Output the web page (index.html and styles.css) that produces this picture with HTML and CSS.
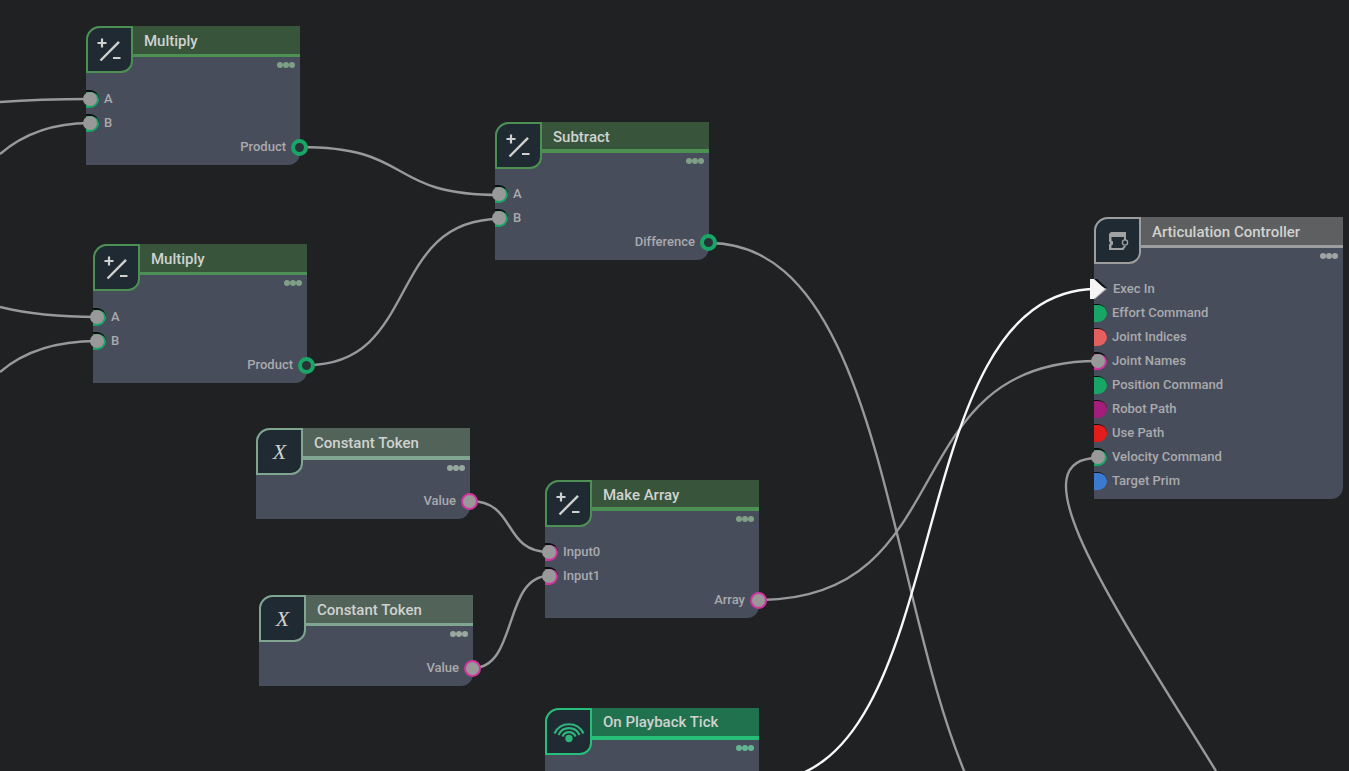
FILE: index.html
```html
<!DOCTYPE html>
<html lang="en">
<head>
<meta charset="utf-8">
<title>Action Graph</title>
<link rel="stylesheet" href="styles.css">
</head>
<body>
<svg class="symbols" aria-hidden="true">
  <symbol id="math" viewBox="0 0 43 43"><path d="M9.500 15h9M14 10.500v9M25 30h7.500" stroke-width="2.200"/><path d="M12.500 32.500 31 13.800" stroke-width="2.400"/></symbol>
  <symbol id="joint" viewBox="0 0 43 43"><path class="solid" d="M15 13h15v8.500h-2V18H15.500v3.500l1.500 1v3l-1.500 1v2.500H26l2-2h2l-2.500 4H13V25.500l1-1v-1l-1-1V15z"/><circle cx="29" cy="23.500" r="2.600" stroke-width="1.300" class="hole"/></symbol>
  <symbol id="signal" viewBox="0 0 43 43"><circle cx="22" cy="28.500" r="3.700" class="dot"/><path d="M15.500 26.500a7 7 0 0 1 13 0M11.500 25a11.500 11.500 0 0 1 21 0M7.500 23.500a16 16 0 0 1 29 0" stroke-width="2.200"/></symbol>
</svg>
<main class="canvas">
  <svg class="wires" aria-hidden="true">
    <path d="M0 102Q40 99 90 99"/>
    <path d="M0 154Q36 123 90 123"/>
    <path d="M0 307Q40 317 97 317"/>
    <path d="M0 372Q36 341 97 341"/>
    <path d="M300 147C416 147 384 195 500 195"/>
    <path d="M307 365C421 365 385 219 500 219"/>
    <path d="M470 501C517 501 502 552 549 552"/>
    <path d="M473 668C518 668 503 576 549 576"/>
    <path d="M709 243C945 243 867 898 1103 898"/>
    <path d="M759 600C963 600 893 361 1097 361"/>
    <path d="M1098 458C1014 458 1110 600 1216 771"/>
    <path class="exec" d="M759 782C962 782 894 289 1097 289"/>
  </svg>

  <section class="node math multiply-one">
    <header><span class="icon"><svg><use href="#math"/></svg></span><h2>Multiply</h2><button class="menu" aria-label="Multiply options"><i></i><i></i><i></i></button></header>
    <ul>
      <li class="in number linked">A</li>
      <li class="in number linked">B</li>
      <li class="out number">Product</li>
    </ul>
  </section>

  <section class="node math multiply-two">
    <header><span class="icon"><svg><use href="#math"/></svg></span><h2>Multiply</h2><button class="menu" aria-label="Multiply options"><i></i><i></i><i></i></button></header>
    <ul>
      <li class="in number linked">A</li>
      <li class="in number linked">B</li>
      <li class="out number">Product</li>
    </ul>
  </section>

  <section class="node math subtract">
    <header><span class="icon"><svg><use href="#math"/></svg></span><h2>Subtract</h2><button class="menu" aria-label="Subtract options"><i></i><i></i><i></i></button></header>
    <ul>
      <li class="in number linked">A</li>
      <li class="in number linked">B</li>
      <li class="out number">Difference</li>
    </ul>
  </section>

  <section class="node token token-one">
    <header><span class="icon glyph">X</span><h2>Constant Token</h2><button class="menu" aria-label="Constant Token options"><i></i><i></i><i></i></button></header>
    <ul>
      <li class="out name linked">Value</li>
    </ul>
  </section>

  <section class="node token token-two">
    <header><span class="icon glyph">X</span><h2>Constant Token</h2><button class="menu" aria-label="Constant Token options"><i></i><i></i><i></i></button></header>
    <ul>
      <li class="out name linked">Value</li>
    </ul>
  </section>

  <section class="node math make-array">
    <header><span class="icon"><svg><use href="#math"/></svg></span><h2>Make Array</h2><button class="menu" aria-label="Make Array options"><i></i><i></i><i></i></button></header>
    <ul>
      <li class="in name linked">Input0</li>
      <li class="in name linked">Input1</li>
      <li class="out name linked">Array</li>
    </ul>
  </section>

  <section class="node event playback">
    <header><span class="icon"><svg><use href="#signal"/></svg></span><h2>On Playback Tick</h2><button class="menu" aria-label="On Playback Tick options"><i></i><i></i><i></i></button></header>
  </section>

  <section class="node robot articulation">
    <header><span class="icon"><svg><use href="#joint"/></svg></span><h2>Articulation Controller</h2><button class="menu" aria-label="Articulation Controller options"><i></i><i></i><i></i></button></header>
    <ul>
      <li class="in trigger"><svg class="arrow"><path class="edge" d="M4 0h3l10 9-2 1z"/><path class="shade" d="M4 4 17 10 5 20z"/><path d="M0 0h4l11 10L4 20H0z"/></svg>Exec In</li>
      <li class="in number">Effort Command</li>
      <li class="in index">Joint Indices</li>
      <li class="in name linked">Joint Names</li>
      <li class="in number">Position Command</li>
      <li class="in path">Robot Path</li>
      <li class="in flag">Use Path</li>
      <li class="in number linked">Velocity Command</li>
      <li class="in target">Target Prim</li>
    </ul>
  </section>
</main>
</body>
</html>
```

FILE: styles.css
```css
body {
  margin: 0;
  background: #202123;
  font-family: Roboto, "Liberation Sans", sans-serif;
}

.symbols {
  display: none;
}

.canvas {
  position: relative;
  height: 100vh;
  overflow: hidden;
}

.wires {
  position: absolute;
  inset: 0;
  width: 100%;
  height: 100%;
  fill: none;
  stroke: #999;
  stroke-width: 2.4;
}

.wires .exec {
  stroke: #f8f8f8;
}

.node {
  --head: #38553c;
  --line: #4c9153;
  --dots: #7f9f86;
  position: absolute;
  width: 214px;
  border-radius: 14px 0 12px 0;
  background: #484d5b;
}

.token {
  --head: #52635a;
  --line: #80a692;
  --dots: #98a89f;
}

.event {
  --head: #20714e;
  --line: #25bf7a;
  --dots: #62b692;
}

.robot {
  --head: #5e5f60;
  --line: #9c9d9e;
  --dots: #a2a3a5;
}

.multiply-one { left: 86px; top: 26px; }
.multiply-two { left: 93px; top: 244px; }
.subtract { left: 495px; top: 122px; }
.token-one { left: 256px; top: 428px; }
.token-two { left: 259px; top: 595px; }
.make-array { left: 545px; top: 480px; }
.playback { left: 545px; top: 708px; padding-bottom: 24px; }
.articulation { left: 1094px; top: 217px; width: 249px; }

.node header {
  display: grid;
  grid-template-columns: 47px 1fr;
  grid-template-rows: 31px 30px;
}

.token-one header,
.playback header {
  grid-template-rows: 32px 29px;
}

.subtract header,
.make-array header,
.articulation header {
  grid-template-rows: 31px 29px;
}

.icon {
  grid-row: 1 / 3;
  box-sizing: border-box;
  height: 47px;
  border: 2px solid var(--line);
  border-radius: 14px 0 12px 0;
  background: #1f2a33;
}

.icon svg {
  display: block;
  width: 43px;
  height: 43px;
  fill: none;
  stroke: #d0d0ce;
}

.event .icon svg {
  stroke: #2fb37a;
}

.robot .icon svg {
  stroke: #a0a1a2;
}

.dot {
  fill: #2fb37a;
  stroke: none;
}

.solid {
  fill: #a0a1a2;
  stroke: none;
}

.hole {
  fill: #1f2a33;
}

.glyph {
  color: #d0d0ce;
  font: italic 22px/44px "Liberation Serif", serif;
  text-align: center;
}

.node h2 {
  margin: 0;
  padding-left: 11px;
  border-bottom: 3px solid var(--line);
  background: var(--head);
  color: #d0d2d0;
  font-size: 15px;
  font-weight: 500;
  line-height: 30px;
}

.subtract h2,
.make-array h2,
.token-one h2,
.playback h2 {
  border-bottom-width: 4px;
}

.playback h2 {
  line-height: 28px;
}

.menu {
  display: flex;
  justify-self: end;
  align-self: start;
  margin: 0;
  padding: 5px;
  border: 0;
  background: none;
}

.menu i {
  width: 6px;
  height: 6px;
  border-radius: 50%;
  background: var(--dots);
}

.node ul {
  margin: 0;
  padding: 0 0 6px;
  list-style: none;
}

.node li {
  display: flex;
  align-items: center;
  gap: 5px;
  height: 24px;
  color: #a9aaad;
  font-size: 13px;
  font-weight: 500;
  line-height: 24px;
}

.number { --pin: #18a566; }
.name { --pin: #d1359f; }
.index { --pin: #e65f5f; }
.path { --pin: #a51d7b; }
.flag { --pin: #e51c1c; }
.target { --pin: #3a7bd0; }

.in {
  position: relative;
}

.in:not(.trigger)::before {
  content: "";
  box-sizing: border-box;
  width: 13px;
  height: 18px;
  border-top: 1px solid #07100e;
  border-radius: 0 9px 9px 0;
  background: var(--pin);
}

.in.linked::before {
  border-top-width: 2px;
}

.in.linked::after {
  content: "";
  position: absolute;
  left: -3px;
  top: 5px;
  width: 14px;
  height: 14px;
  border-radius: 50%;
  background: #999;
}

.out {
  justify-content: flex-end;
  margin-right: -8px;
}

.out::after {
  content: "";
  box-sizing: border-box;
  width: 17px;
  height: 17px;
  border: 4px solid var(--pin);
  border-radius: 50%;
  background: #293236;
}

.out.linked::after {
  border-width: 2px;
  background: #999;
}

.arrow {
  width: 18px;
  height: 20px;
  margin-left: -4px;
  fill: #f5f5f5;
}

.edge {
  fill: #07100e;
}

.shade {
  fill: #aaa;
}
```
